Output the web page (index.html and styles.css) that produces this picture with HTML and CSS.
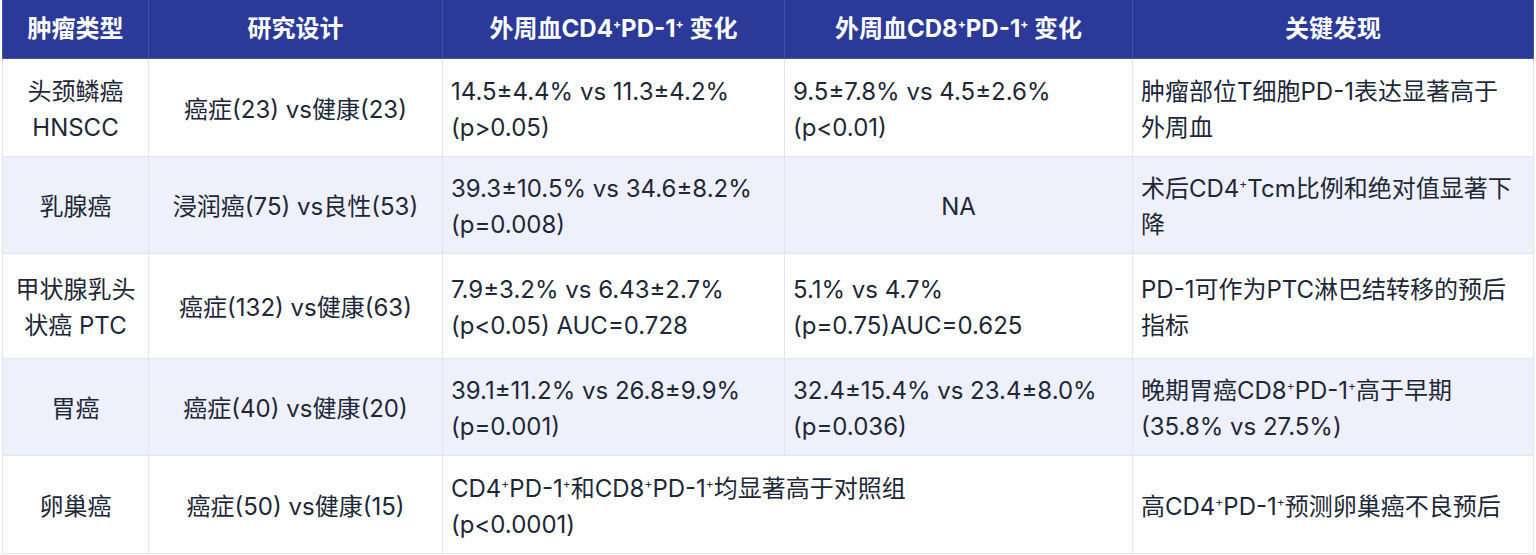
FILE: index.html
```html
<!DOCTYPE html>
<html lang="zh-CN">
<head>
<meta charset="utf-8">
<title>PD-1 表达比较</title>
<link rel="stylesheet" href="styles.css">
</head>
<body>
<table class="grid">
  <colgroup>
    <col class="c-type">
    <col class="c-design">
    <col class="c-cd4">
    <col class="c-cd8">
    <col class="c-key">
  </colgroup>
  <thead>
    <tr>
      <th>肿瘤类型</th>
      <th>研究设计</th>
      <th>外周血CD4<sup class="sp">+</sup>PD-1<sup class="sp">+</sup> 变化</th>
      <th>外周血CD8<sup class="sp">+</sup>PD-1<sup class="sp">+</sup> 变化</th>
      <th>关键发现</th>
    </tr>
  </thead>
  <tbody>
    <tr>
      <td class="ctr">头颈鳞癌<br>HNSCC</td>
      <td class="ctr">癌症(23) vs健康(23)</td>
      <td>14.5±4.4% vs 11.3±4.2%<br>(p&gt;0.05)</td>
      <td>9.5±7.8% vs 4.5±2.6%<br>(p&lt;0.01)</td>
      <td>肿瘤部位T细胞PD-1表达显著高于外周血</td>
    </tr>
    <tr class="alt">
      <td class="ctr">乳腺癌</td>
      <td class="ctr">浸润癌(75) vs良性(53)</td>
      <td>39.3±10.5% vs 34.6±8.2%<br>(p=0.008)</td>
      <td class="ctr">NA</td>
      <td>术后CD4<sup class="sp">+</sup>Tcm比例和绝对值显著下降</td>
    </tr>
    <tr class="tall">
      <td class="ctr">甲状腺乳头<br>状癌 PTC</td>
      <td class="ctr">癌症(132) vs健康(63)</td>
      <td>7.9±3.2% vs 6.43±2.7%<br>(p&lt;0.05) AUC=0.728</td>
      <td>5.1% vs 4.7%<br>(p=0.75)AUC=0.625</td>
      <td>PD-1可作为PTC淋巴结转移的预后指标</td>
    </tr>
    <tr class="alt">
      <td class="ctr">胃癌</td>
      <td class="ctr">癌症(40) vs健康(20)</td>
      <td>39.1±11.2% vs 26.8±9.9%<br>(p=0.001)</td>
      <td>32.4±15.4% vs 23.4±8.0%<br>(p=0.036)</td>
      <td>晚期胃癌CD8<sup class="sp">+</sup>PD-1<sup class="sp">+</sup>高于早期<br>(35.8% vs 27.5%)</td>
    </tr>
    <tr>
      <td class="ctr">卵巢癌</td>
      <td class="ctr">癌症(50) vs健康(15)</td>
      <td colspan="2">CD4<sup class="sp">+</sup>PD-1<sup class="sp">+</sup>和CD8<sup class="sp">+</sup>PD-1<sup class="sp">+</sup>均显著高于对照组<br>(p&lt;0.0001)</td>
      <td>高CD4<sup class="sp">+</sup>PD-1<sup class="sp">+</sup>预测卵巢癌不良预后</td>
    </tr>
  </tbody>
</table>
</body>
</html>
```
FILE: styles.css
```css
html, body {
  margin: 0;
  padding: 0;
  background: #ffffff;
}

body {
  font-family: "Inter", "Noto Sans CJK SC", sans-serif;
  font-size: 24px;
  line-height: 36px;
  color: #1e2838;
}

.grid {
  margin: 0 0 0 2px;
  width: 1531px;
  table-layout: fixed;
  border-collapse: collapse;
}

.c-type { width: 146px; }
.c-design { width: 294px; }
.c-cd4 { width: 342px; }
.c-cd8 { width: 348px; }
.c-key { width: 401px; }

.grid th {
  background: #2b3a98;
  color: #ffffff;
  font-weight: bold;
  text-align: center;
  padding: 11px 8px;
  border: 1px solid #4654a8;
  border-top: none;
  white-space: nowrap;
}

.grid td {
  padding: 14.5px 8px 10px;
  border: 1px solid #e1e4f1;
  vertical-align: middle;
  text-align: left;
}

.grid td:last-child {
  padding-right: 14px;
}

.grid tr.alt td {
  background: #eef0fc;
}

.grid tr.tall td {
  padding-top: 17.5px;
  padding-bottom: 14px;
}

.grid td.ctr {
  text-align: center;
}

.sp {
  font-size: 0.5em;
  line-height: 0;
  vertical-align: 0.75em;
}
```
